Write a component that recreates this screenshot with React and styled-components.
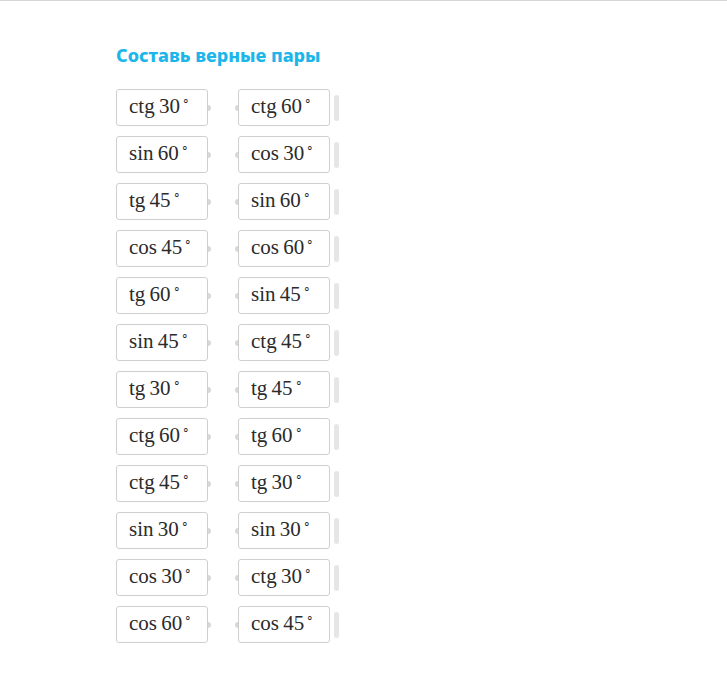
import React from 'react'
import styled, { createGlobalStyle } from 'styled-components'

const GlobalStyle = createGlobalStyle`
  html, body {
    margin: 0;
    padding: 0;
    background: #fff;
  }
`

const Page = styled.div`
  min-height: 690px;
  border-top: 1px solid #d6d6d6;
  padding: 43px 0 0 116px;
  box-sizing: border-box;
`

const Title = styled.h2`
  margin: 0 0 23px;
  font-family: "Noto Sans", "Open Sans", sans-serif;
  font-weight: 800;
  font-size: 18px;
  line-height: 22px;
  letter-spacing: 0;
  color: #1cb6ea;
`

const Pairs = styled.div`
  display: flex;
  flex-direction: column;
  gap: 10px;
`

const Row = styled.div`
  display: flex;
  align-items: center;
`

const Card = styled.div`
  position: relative;
  width: 92px;
  height: 37px;
  box-sizing: border-box;
  border: 1px solid #cfcfcf;
  border-radius: 3px;
  padding: 0 0 3px 12px;
  display: flex;
  align-items: center;
  font-family: "Liberation Serif", "Times New Roman", serif;
  font-size: 21px;
  color: #2b2b2b;

  &::after {
    content: '';
    position: absolute;
    top: 15px;
    ${p => (p.$side === 'left' ? 'right: -4px;' : 'left: -4px;')}
    width: 3px;
    height: 6px;
    background: #d8d8d8;
    border-radius: ${p => (p.$side === 'left' ? '0 3px 3px 0' : '3px 0 0 3px')};
  }
`

const Gap = styled.div`
  width: 30px;
`

const Degree = styled.span`
  font-size: 12px;
  margin-left: 2px;
  position: relative;
  top: -8px;
`

const Handle = styled.div`
  width: 5px;
  height: 26px;
  margin-left: 4px;
  border-radius: 3px;
  background: #e6e6e6;
`

const rows = [
  ['ctg', '30', 'ctg', '60'],
  ['sin', '60', 'cos', '30'],
  ['tg', '45', 'sin', '60'],
  ['cos', '45', 'cos', '60'],
  ['tg', '60', 'sin', '45'],
  ['sin', '45', 'ctg', '45'],
  ['tg', '30', 'tg', '45'],
  ['ctg', '60', 'tg', '60'],
  ['ctg', '45', 'tg', '30'],
  ['sin', '30', 'sin', '30'],
  ['cos', '30', 'ctg', '30'],
  ['cos', '60', 'cos', '45'],
]

const Expr = ({ fn, deg }) => (
  <span>
    {fn}&thinsp;{deg}
    <Degree>∘</Degree>
  </span>
)

const App = () => {
  return (
    <>
      <GlobalStyle />
      <Page>
        <Title>Составь верные пары</Title>
        <Pairs>
          {rows.map((r, i) => (
            <Row key={i}>
              <Card $side="left">
                <Expr fn={r[0]} deg={r[1]} />
              </Card>
              <Gap />
              <Card $side="right">
                <Expr fn={r[2]} deg={r[3]} />
              </Card>
              <Handle />
            </Row>
          ))}
        </Pairs>
      </Page>
    </>
  )
}

export default App
